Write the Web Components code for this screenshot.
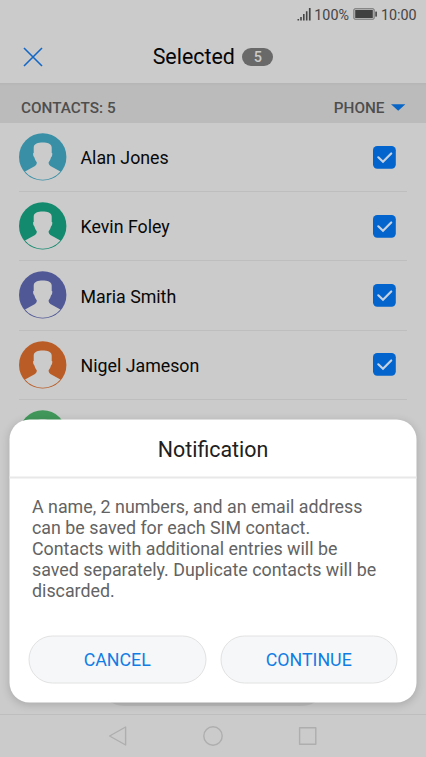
<!DOCTYPE html>
<html lang="en">
<head>
<meta charset="utf-8">
<title>Contacts</title>
<style>
    html, body {
        margin: 0;
        height: 100%;
        overflow: hidden;
        background: #cbcbcb;
        font-family: Roboto, "Liberation Sans", sans-serif;
    }
</style>
</head>
<body>
<contacts-screen></contacts-screen>

<script>
class StatusBar extends HTMLElement {
    constructor() {
        super();
        this.attachShadow({ mode: "open" }).innerHTML = `
        <style>
            :host {
                display: flex;
                justify-content: flex-end;
                align-items: center;
                box-sizing: border-box;
                height: 30px;
                padding: 0 9.5px 1px 0;
                color: #454545;
                font-size: 14.3px;
            }
            svg { display: block; }
            .signal { margin: 0 2px 1px 0; }
            .battery { margin: 0 3px 1px 4px; }
        </style>
        <svg class="signal" width="15" height="14" fill="#454545">
            <path d="M0.5 12h1.6v1.6H.5zM3.2 10h1.6v3.6H3.2zM6 7h1.6v6.6H6zM8.9 4.3h1.6v9.3H8.9zM11.9 1h1.7v12.6h-1.7z"/>
        </svg>
        <span>100%</span>
        <svg class="battery" width="25" height="12">
            <rect x=".9" y=".8" width="20.2" height="10.4" rx="1" fill="none" stroke="#6a6a6a"/>
            <rect x="2.2" y="2" width="17.6" height="8" fill="#404040"/>
            <rect x="22.3" y="3.6" width="1.6" height="5" fill="#454545"/>
        </svg>
        <span>10:00</span>
        `;
    }
}
customElements.define("status-bar", StatusBar);

class SelectionHeader extends HTMLElement {
    constructor() {
        super();
        this.attachShadow({ mode: "open" }).innerHTML = `
        <style>
            :host {
                display: grid;
                grid-template-columns: 66px 1fr 66px;
                align-items: center;
                height: 53px;
            }
            svg { display: block; margin-left: 23px; }
            .title {
                display: flex;
                align-items: center;
                justify-content: center;
                gap: 7.5px;
                color: #050505;
                font-size: 21.4px;
            }
            .count {
                width: 31px;
                height: 18px;
                border-radius: 9px;
                background: #696969;
                color: #cbcbcb;
                font-size: 14.5px;
                font-weight: 500;
                line-height: 19px;
                text-align: center;
            }
        </style>
        <svg width="20" height="20"><path d="M1 1l18 18M19 1L1 19" stroke="#1268c4" stroke-width="1.6"/></svg>
        <div class="title"><slot></slot><span class="count">${this.getAttribute("count")}</span></div>
        `;
    }
}
customElements.define("selection-header", SelectionHeader);

class GroupBar extends HTMLElement {
    constructor() {
        super();
        this.attachShadow({ mode: "open" }).innerHTML = `
        <style>
            :host {
                display: flex;
                justify-content: space-between;
                align-items: center;
                box-sizing: border-box;
                height: 40px;
                padding: 9px 20.5px 0 21px;
                background: linear-gradient(#b5b5b5, #bbb 3px);
                color: #4e4e4e;
                font-size: 15.3px;
                font-weight: 500;
            }
            .sort { display: flex; align-items: center; gap: 6px; }
            svg { display: block; margin-top: -1px; }
        </style>
        <span><slot></slot></span>
        <span class="sort"><slot name="sort"></slot>
            <svg width="15" height="7"><path d="M0 .3h14.4L7.2 6.8z" fill="#0965c6"/></svg>
        </span>
        `;
    }
}
customElements.define("group-bar", GroupBar);

class ContactRow extends HTMLElement {
    constructor() {
        super();
        this.attachShadow({ mode: "open" }).innerHTML = `
        <style>
            :host {
                display: flex;
                align-items: center;
                box-sizing: border-box;
                height: 69.2px;
                margin: 0 19px;
                border-bottom: 1px solid #bebebe;
                color: #080808;
                font-size: 17.8px;
            }
            svg { display: block; flex: none; }
            .name { flex: 1; margin-left: 13.5px; padding-top: 1.4px; }
            .check { margin-right: 11px; }
        </style>
        <svg width="48" height="48">
            <circle cx="23.7" cy="23.9" r="23.7" fill="${this.getAttribute("color")}"/>
            <path fill="#cbcbcb" d="M6 38.4L16 33Q18.2 31.6 17.7 29.3 16 27.4 15.4 24.6 14.2 24 14 20.4L14.7 20V14.5C15 10.7 19 9.6 23.7 9.6S32.4 10.7 32.7 14.5V20L33.4 20.4Q33.2 24 32 24.6 31.4 27.4 29.7 29.3 29.2 31.6 31.4 33L41.4 38.4A22.9 22.9 0 0 1 6 38.4z"/>
        </svg>
        <span class="name"><slot></slot></span>
        <svg class="check" width="23" height="23">
            <rect width="22.8" height="22.8" rx="4.2" fill="#0264cc"/>
            <path d="M5.3 11.3l4.7 4.5 8.2-8.3" fill="none" stroke="#c5d2e2" stroke-width="2.2" stroke-linecap="round"/>
        </svg>
        `;
    }
}
customElements.define("contact-row", ContactRow);

class NavBar extends HTMLElement {
    constructor() {
        super();
        this.attachShadow({ mode: "open" }).innerHTML = `
        <style>
            :host {
                display: flex;
                justify-content: center;
                align-items: center;
                gap: 75px;
                box-sizing: border-box;
                height: 43px;
                border-top: 1px solid #bebebe;
            }
            svg { display: block; fill: none; stroke: #aeaeae; stroke-width: 1.4; stroke-linejoin: round; }
        </style>
        <svg width="20" height="20"><path d="M17.6 1v18L1.6 10z"/></svg>
        <svg width="20" height="20"><circle cx="10" cy="10" r="9.2"/></svg>
        <svg width="20" height="20"><rect x="1.6" y="1.8" width="16.2" height="16.4"/></svg>
        `;
    }
}
customElements.define("nav-bar", NavBar);

class PillButton extends HTMLElement {
    constructor() {
        super();
        this.attachShadow({ mode: "open" }).innerHTML = `
        <style>
            :host { display: flex; flex: 1; }
            button {
                flex: 1;
                height: 48px;
                padding: 0 0 1px;
                border: 1px solid #e2e2e3;
                border-radius: 24px;
                background: #f6f7f8;
                color: #117de4;
                font: inherit;
                font-size: 17.8px;
            }
        </style>
        <button><slot></slot></button>
        `;
    }
}
customElements.define("pill-button", PillButton);

class NoticeDialog extends HTMLElement {
    constructor() {
        super();
        this.attachShadow({ mode: "open" }).innerHTML = `
        <style>
            :host {
                display: flex;
                flex-direction: column;
                box-sizing: border-box;
                border-radius: 20px;
                background: #fff;
                box-shadow: 0 2px 8px rgba(0, 0, 0, 0.16);
            }
            h2 {
                margin: 0;
                height: 57px;
                border-bottom: 2px solid #e8e8e8;
                color: #202020;
                font-size: 21.4px;
                font-weight: 400;
                line-height: 59px;
                text-align: center;
            }
            .text {
                flex: 1;
                padding: 17px 22px 0 22.5px;
                color: #636363;
                font-size: 17.83px;
                line-height: 21px;
            }
            .actions { display: flex; gap: 14px; padding: 0 19px 19px; }
        </style>
        <h2><slot name="title"></slot></h2>
        <div class="text"><slot></slot></div>
        <div class="actions"><slot name="action"></slot></div>
        `;
    }
}
customElements.define("notice-dialog", NoticeDialog);

class ContactsScreen extends HTMLElement {
    constructor() {
        super();
        this.attachShadow({ mode: "open" }).innerHTML = `
        <style>
            :host {
                display: flex;
                flex-direction: column;
                position: relative;
                width: 426px;
                height: 757px;
                overflow: hidden;
                background: #cbcbcb;
            }
            .list { flex: 1; min-height: 0; overflow: hidden; }
            /* bottom action of the list, mostly covered by the dialog */
            .action {
                align-self: center;
                width: 226px;
                height: 48px;
                margin-bottom: 8px;
                border-radius: 24px;
                background: #bcbcbc;
            }
            notice-dialog {
                position: absolute;
                left: 10px;
                top: 420px;
                width: 407px;
                height: 283px;
                transform: translate(-0.5px, -0.5px);
            }
        </style>
        <status-bar></status-bar>
        <selection-header count="5">Selected</selection-header>
        <group-bar>CONTACTS: 5<span slot="sort">PHONE</span></group-bar>
        <div class="list">
            <contact-row color="#388fa6">Alan Jones</contact-row>
            <contact-row color="#138a6d">Kevin Foley</contact-row>
            <contact-row color="#505896">Maria Smith</contact-row>
            <contact-row color="#ba5c26">Nigel Jameson</contact-row>
            <contact-row color="#41975a"></contact-row>
        </div>
        <div class="action"></div>
        <nav-bar></nav-bar>
        <notice-dialog>
            <span slot="title">Notification</span>
            A name, 2 numbers, and an email address<br>can be saved for each SIM contact.<br>Contacts with additional entries will be<br>saved separately. Duplicate contacts will be<br>discarded.
            <pill-button slot="action">CANCEL</pill-button>
            <pill-button slot="action">CONTINUE</pill-button>
        </notice-dialog>
        `;
    }
}
customElements.define("contacts-screen", ContactsScreen);
</script>
</body>
</html>
